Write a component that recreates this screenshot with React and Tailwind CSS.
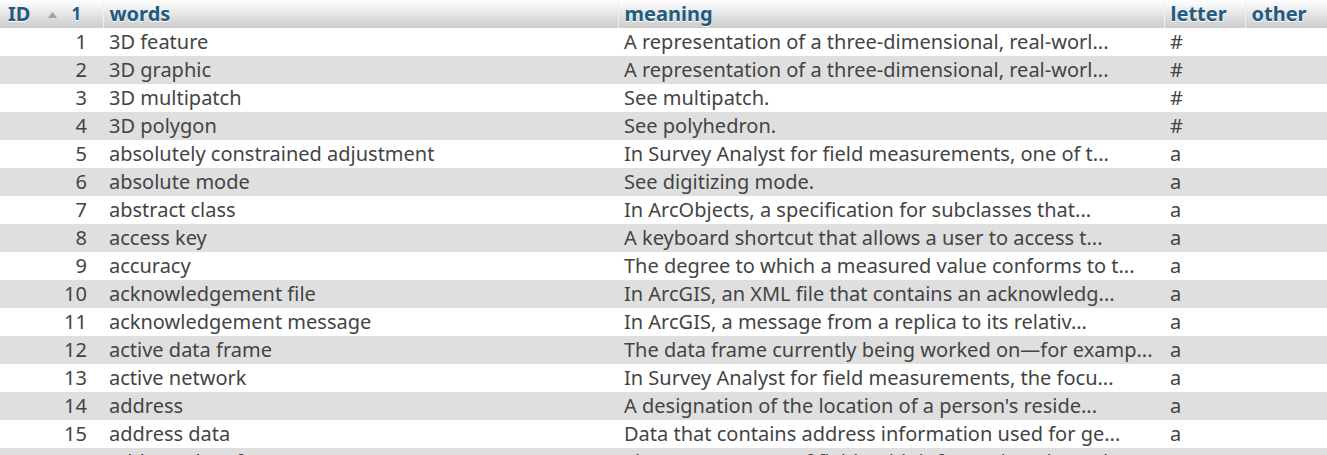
import React from "react";

const rows = [
  [1, "3D feature", "A representation of a three-dimensional, real-worl...", "#"],
  [2, "3D graphic", "A representation of a three-dimensional, real-worl...", "#"],
  [3, "3D multipatch", "See multipatch.", "#"],
  [4, "3D polygon", "See polyhedron.", "#"],
  [5, "absolutely constrained adjustment", "In Survey Analyst for field measurements, one of t...", "a"],
  [6, "absolute mode", "See digitizing mode.", "a"],
  [7, "abstract class", "In ArcObjects, a specification for subclasses that...", "a"],
  [8, "access key", "A keyboard shortcut that allows a user to access t...", "a"],
  [9, "accuracy", "The degree to which a measured value conforms to t...", "a"],
  [10, "acknowledgement file", "In ArcGIS, an XML file that contains an acknowledg...", "a"],
  [11, "acknowledgement message", "In ArcGIS, a message from a replica to its relativ...", "a"],
  [12, "active data frame", "The data frame currently being worked on\u2014for examp...", "a"],
  [13, "active network", "In Survey Analyst for field measurements, the focu...", "a"],
  [14, "address", "A designation of the location of a person's reside...", "a"],
  [15, "address data", "Data that contains address information used for ge...", "a"],
  [16, "address data format", "The arrangement of fields with information about the...", "a"],
];

function Th({ children, className = "" }) {
  return (
    <th
      className={
        "h-[28px] border-r border-[#f0f0f0] bg-gradient-to-b from-white to-[#cccccc] px-[6px] text-left align-middle font-bold text-[#235a81] [text-shadow:0_1px_0_#fff] " +
        className
      }
    >
      {children}
    </th>
  );
}

export default function App() {
  return (
    <div
      className="h-[455px] w-[1327px] overflow-hidden bg-white text-[20px] leading-[28px] text-[#444444]"
      style={{ fontFamily: "'Noto Sans', 'Open Sans', sans-serif" }}
    >
      <table className="w-[1327px] table-fixed border-collapse">
        <colgroup>
          <col className="w-[103px]" />
          <col className="w-[515px]" />
          <col className="w-[546px]" />
          <col className="w-[81px]" />
          <col className="w-[82px]" />
        </colgroup>
        <thead>
          <tr>
            <Th className="pl-[8px]">
              <div className="flex items-center">
                <span>ID</span>
                <svg className="ml-[18px] mt-[1px]" width="9" height="6" viewBox="0 0 9 6">
                  <path d="M0 6 L4.5 0 L9 6 Z" fill="#9aa3a8" />
                </svg>
                <span className="ml-[14px] text-[17px]">1</span>
              </div>
            </Th>
            <Th>words</Th>
            <Th>meaning</Th>
            <Th>letter</Th>
            <Th className="border-r-0">other</Th>
          </tr>
        </thead>
        <tbody>
          {rows.map(([id, word, meaning, letter]) => (
            <tr key={id} className={id % 2 === 0 ? "bg-[#dfdfdf]" : "bg-white"}>
              <td className="h-[28px] whitespace-nowrap pr-[16px] text-right">{id}</td>
              <td className="whitespace-nowrap px-[6px]">{word}</td>
              <td className="overflow-hidden whitespace-nowrap px-[6px]">{meaning}</td>
              <td className="whitespace-nowrap px-[6px]">{letter}</td>
              <td className="px-[6px]"></td>
            </tr>
          ))}
        </tbody>
      </table>
    </div>
  );
}
